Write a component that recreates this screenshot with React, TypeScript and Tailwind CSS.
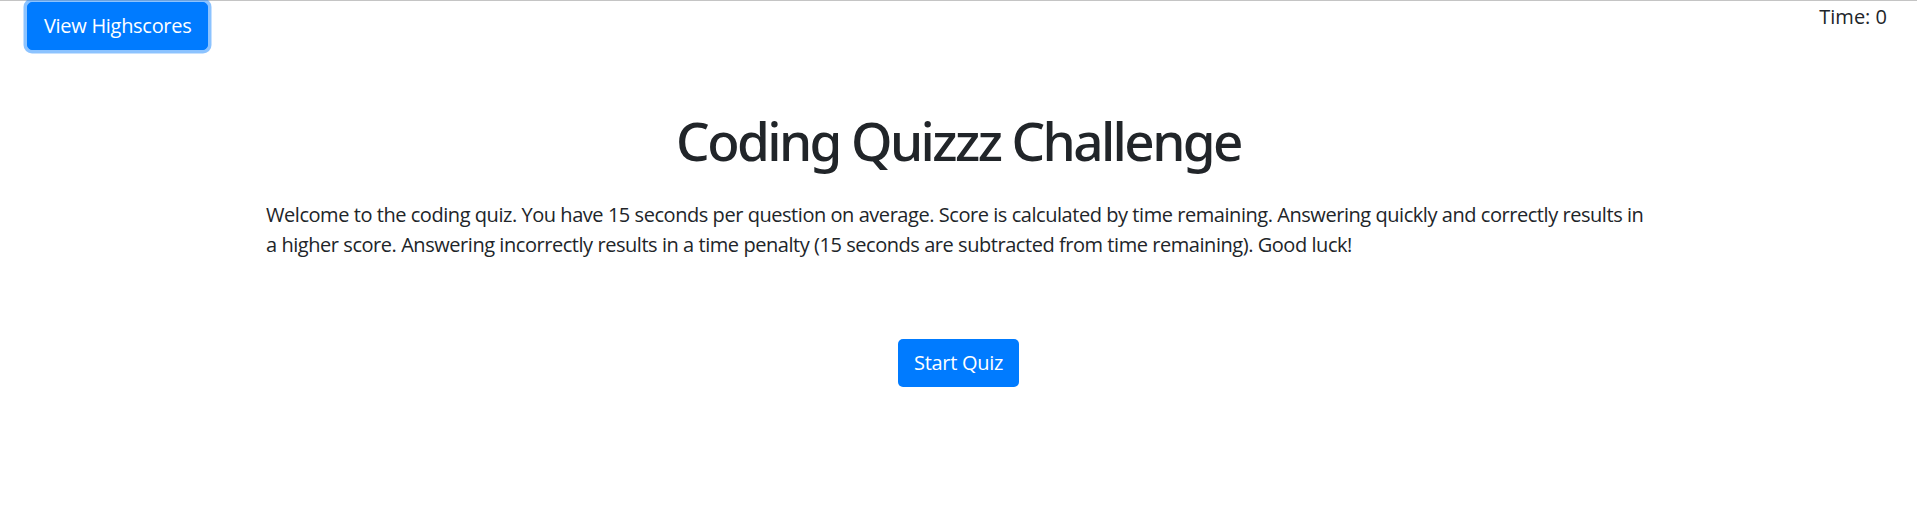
import React from 'react';

const font = { fontFamily: '"Segoe UI", "Open Sans", "Liberation Sans", sans-serif' };
const headingFont = { fontFamily: '"Segoe UI", "Noto Sans", "Open Sans", sans-serif' };

// Header: highscores button + timer
const Header = () => (
  <header className="flex items-start justify-between">
    <button className="ml-[27px] mt-px h-[48px] px-4 rounded-[5px] border border-[#007bff] bg-[#007bff] text-white text-[20px] leading-[30px] shadow-[0_0_0_3.5px_rgba(0,123,255,0.45)] tracking-[-0.3px]">
      View Highscores
    </button>
    <div className="mt-[1px] mr-[30px] text-[20px] leading-[30px] text-[#212529]">Time: 0</div>
  </header>
);

export default function App() {
  return (
    <div className="min-h-[519px] bg-white border-t border-[#c4c4c4] text-[#212529]" style={font}>
      <Header />
      <main className="flex flex-col items-center">
        <h1 className="mt-[58px] text-[53px] leading-[66px] font-medium tracking-[-2.6px]" style={headingFont}>Coding Quizzz Challenge</h1>
        <p className="mt-[26px] w-[1385px] text-[20px] leading-[30px] tracking-[-0.45px]">
          Welcome to the coding quiz. You have 15 seconds per question on average. Score is calculated by time remaining. Answering quickly and correctly results in a higher score. Answering incorrectly results in a time penalty (15 seconds are subtracted from time remaining). Good luck!
        </p>
        <button className="mt-[79px] h-[48px] px-4 rounded-[5px] bg-[#007bff] text-white text-[20px] leading-[30px] tracking-[-0.3px]">
          Start Quiz
        </button>
      </main>
    </div>
  );
}
